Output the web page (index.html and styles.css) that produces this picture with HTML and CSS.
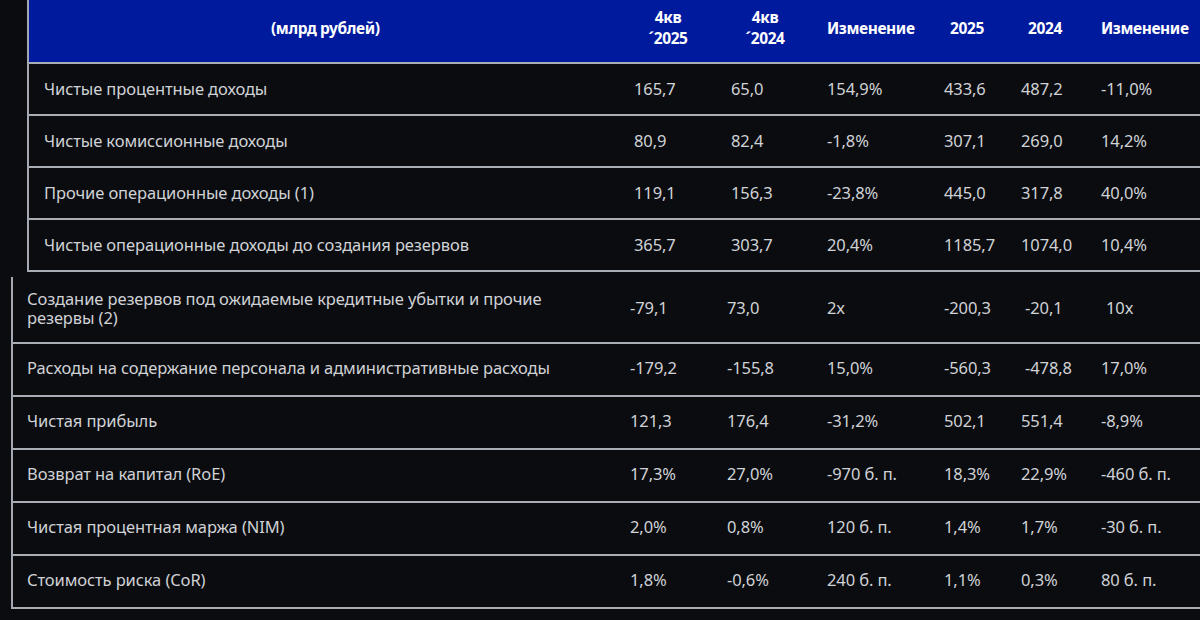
FILE: index.html
```html
<!DOCTYPE html>
<html lang="ru">
<head>
<meta charset="utf-8">
<link rel="stylesheet" href="styles.css">
</head>
<body>
<div class="page">
  <div class="block top">
    <div class="row head">
      <div class="cell label hlabel">(млрд рублей)</div>
      <div class="cell h1">4кв<br>´2025</div>
      <div class="cell h2">4кв<br>´2024</div>
      <div class="cell h3">Изменение</div>
      <div class="cell h4">2025</div>
      <div class="cell h5">2024</div>
      <div class="cell h6">Изменение</div>
    </div>
    <div class="row">
      <div class="cell label">Чистые процентные доходы</div>
      <div class="cell">165,7</div><div class="cell">65,0</div><div class="cell">154,9%</div>
      <div class="cell">433,6</div><div class="cell">487,2</div><div class="cell">-11,0%</div>
    </div>
    <div class="row">
      <div class="cell label">Чистые комиссионные доходы</div>
      <div class="cell">80,9</div><div class="cell">82,4</div><div class="cell">-1,8%</div>
      <div class="cell">307,1</div><div class="cell">269,0</div><div class="cell">14,2%</div>
    </div>
    <div class="row">
      <div class="cell label">Прочие операционные доходы (1)</div>
      <div class="cell">119,1</div><div class="cell">156,3</div><div class="cell">-23,8%</div>
      <div class="cell">445,0</div><div class="cell">317,8</div><div class="cell">40,0%</div>
    </div>
    <div class="row">
      <div class="cell label">Чистые операционные доходы до создания резервов</div>
      <div class="cell">365,7</div><div class="cell">303,7</div><div class="cell">20,4%</div>
      <div class="cell">1185,7</div><div class="cell">1074,0</div><div class="cell">10,4%</div>
    </div>
  </div>
  <div class="block bottom">
    <div class="row tall">
      <div class="cell label"><span class="wrap">Создание резервов под ожидаемые кредитные убытки и прочие резервы (2)</span></div>
      <div class="cell">-79,1</div><div class="cell">73,0</div><div class="cell">2x</div>
      <div class="cell">-200,3</div><div class="cell c5">-20,1</div><div class="cell c6">10x</div>
    </div>
    <div class="row">
      <div class="cell label">Расходы на содержание персонала и административные расходы</div>
      <div class="cell">-179,2</div><div class="cell">-155,8</div><div class="cell">15,0%</div>
      <div class="cell">-560,3</div><div class="cell c5">-478,8</div><div class="cell">17,0%</div>
    </div>
    <div class="row">
      <div class="cell label">Чистая прибыль</div>
      <div class="cell">121,3</div><div class="cell">176,4</div><div class="cell">-31,2%</div>
      <div class="cell">502,1</div><div class="cell">551,4</div><div class="cell">-8,9%</div>
    </div>
    <div class="row">
      <div class="cell label">Возврат на капитал (RoE)</div>
      <div class="cell">17,3%</div><div class="cell">27,0%</div><div class="cell">-970 б. п.</div>
      <div class="cell">18,3%</div><div class="cell">22,9%</div><div class="cell">-460 б. п.</div>
    </div>
    <div class="row">
      <div class="cell label">Чистая процентная маржа (NIM)</div>
      <div class="cell">2,0%</div><div class="cell">0,8%</div><div class="cell">120 б. п.</div>
      <div class="cell">1,4%</div><div class="cell">1,7%</div><div class="cell">-30 б. п.</div>
    </div>
    <div class="row">
      <div class="cell label">Стоимость риска (CoR)</div>
      <div class="cell">1,8%</div><div class="cell">-0,6%</div><div class="cell">240 б. п.</div>
      <div class="cell">1,1%</div><div class="cell">0,3%</div><div class="cell">80 б. п.</div>
    </div>
  </div>
</div>
</body>
</html>
```

FILE: styles.css
```css
html, body {
  margin: 0;
  padding: 0;
  background: #0a0c10;
}
body {
  width: 1200px;
  height: 620px;
  overflow: hidden;
  font-family: "Noto Sans", "Open Sans", sans-serif;
  color: #d0d2d6;
  font-size: 16.5px;
  letter-spacing: -0.1px;
}
.page {
  display: flex;
  flex-direction: column;
}
.block {
  border-left: 2px solid #a4a8b0;
}
.top {
  margin-left: 27px;
}
.bottom {
  margin-left: 11px;
  margin-top: 5px;
}
.row {
  display: grid;
  align-items: center;
  height: 50px;
  border-bottom: 2px solid #a9adb5;
}
.top .row {
  grid-template-columns: 605px 97px 96px 117px 77px 80px 1fr;
}
.top .row .cell {
  padding-bottom: 1px;
}
.bottom .row {
  grid-template-columns: 617px 97px 100px 117px 77px 80px 1fr;
  height: 51px;
}
.bottom .row .cell {
  padding-bottom: 4px;
}
.bottom .row.tall {
  height: 65px;
}
.label {
  padding-left: 15px;
}
.bottom .label {
  padding-left: 14px;
}
.wrap {
  display: block;
  max-width: 540px;
  line-height: 19px;
}
.head {
  height: 62px;
  background: #001a9e;
  color: #ffffff;
  font-weight: 700;
  font-size: 15.5px;
  line-height: 21px;
  letter-spacing: -0.4px;
}
.top .head .cell {
  padding-bottom: 6px;
}
.hlabel {
  padding-left: 242px;
}
.h1 { text-align: center; padding-right: 29px; }
.h2 { text-align: center; padding-right: 28px; }
.h3 { padding-left: 0; }
.h4 { padding-left: 6px; }
.h5 { padding-left: 7px; }
.h6 { padding-left: 0; }
.c5 { padding-left: 4px; }
.c6 { padding-left: 5px; }
```
